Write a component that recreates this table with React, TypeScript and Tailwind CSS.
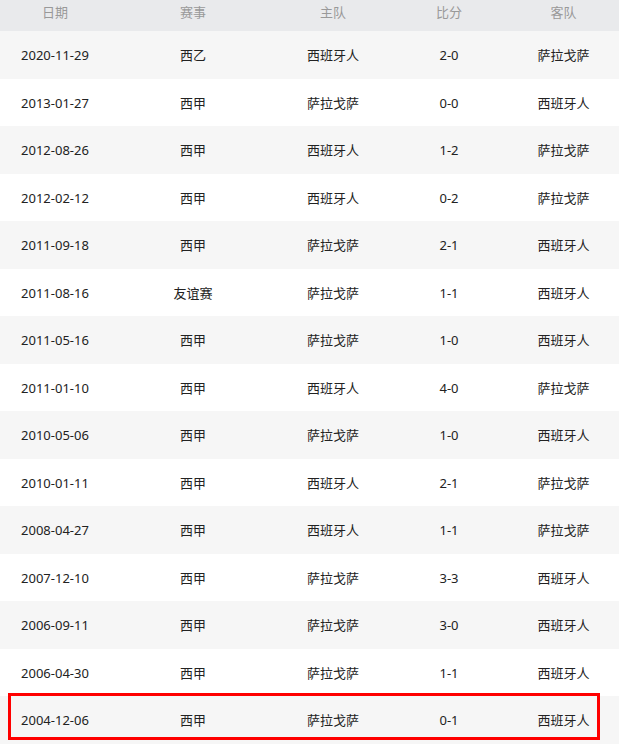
const rows = [
  ['2020-11-29', '西乙', '西班牙人', '2-0', '萨拉戈萨'],
  ['2013-01-27', '西甲', '萨拉戈萨', '0-0', '西班牙人'],
  ['2012-08-26', '西甲', '西班牙人', '1-2', '萨拉戈萨'],
  ['2012-02-12', '西甲', '西班牙人', '0-2', '萨拉戈萨'],
  ['2011-09-18', '西甲', '萨拉戈萨', '2-1', '西班牙人'],
  ['2011-08-16', '友谊赛', '萨拉戈萨', '1-1', '西班牙人'],
  ['2011-05-16', '西甲', '萨拉戈萨', '1-0', '西班牙人'],
  ['2011-01-10', '西甲', '西班牙人', '4-0', '萨拉戈萨'],
  ['2010-05-06', '西甲', '萨拉戈萨', '1-0', '西班牙人'],
  ['2010-01-11', '西甲', '西班牙人', '2-1', '萨拉戈萨'],
  ['2008-04-27', '西甲', '西班牙人', '1-1', '萨拉戈萨'],
  ['2007-12-10', '西甲', '萨拉戈萨', '3-3', '西班牙人'],
  ['2006-09-11', '西甲', '萨拉戈萨', '3-0', '西班牙人'],
  ['2006-04-30', '西甲', '萨拉戈萨', '1-1', '西班牙人'],
  ['2004-12-06', '西甲', '萨拉戈萨', '0-1', '西班牙人'],
];

const cols = 'grid grid-cols-[110px_166px_114px_118px_111px]';

export default function App() {
  return (
    <div className="w-[619px] h-[746px] overflow-hidden bg-white text-[13px] font-['Noto_Sans','Noto_Sans_CJK_SC',sans-serif]">
      {/* header */}
      <div className={`${cols} h-[31px] items-center pb-[5px] bg-[#e9eaec] text-[#999]`}>
        {['日期', '赛事', '主队', '比分', '客队'].map((h) => (
          <div key={h} className="text-center">{h}</div>
        ))}
      </div>
      {rows.map((r, i) => (
        <div
          key={i}
          className={`relative ${cols} h-[47.5px] items-center pt-[2px] text-[#222] ${i % 2 === 0 ? 'bg-[#f6f6f6]' : 'bg-white'}`}
        >
          {r.map((c, j) => (
            <div key={j} className="text-center">{c}</div>
          ))}
          {/* highlighted last match */}
          {i === rows.length - 1 && (
            <div className="absolute left-[8px] top-[-3px] w-[592px] h-[47px] border-[3px] border-[#ff0000]" />
          )}
        </div>
      ))}
    </div>
  );
}
